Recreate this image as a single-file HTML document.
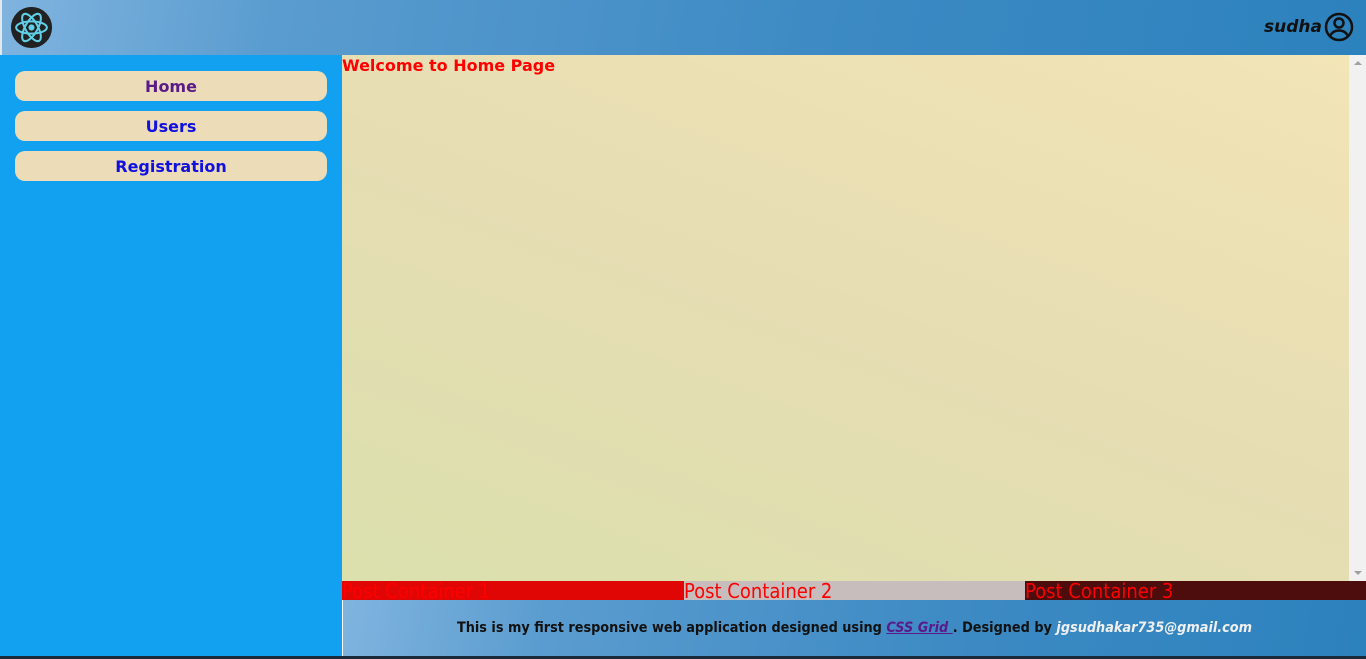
<!DOCTYPE html>
<html><head><style>
*{margin:0;padding:0;box-sizing:border-box}
body{width:1366px;height:659px;overflow:hidden;font-family:"DejaVu Sans","Liberation Sans",sans-serif;background:#fff;position:relative}
.hdr{position:absolute;left:0;top:0;width:1366px;height:55px;background:linear-gradient(100deg,#80b4df 0%,#5a9ccf 20%,#3d8ac4 60%,#2c82bd 100%);border-left:2px solid #e0e8f0}
.logo{position:absolute;left:9px;top:7px;width:41px;height:41px;border-radius:50%;background:#222}
.user{position:absolute;right:12px;top:12px;display:flex;align-items:center;font-style:italic;font-weight:bold;font-size:17px;color:#111}
.side{position:absolute;left:0;top:55px;width:342px;height:604px;background:#12a0f0}
.btn{position:absolute;left:15px;width:312px;height:30px;border-radius:10px;background:#ecdcb8;text-align:center;font-weight:bold;font-size:16px;line-height:31px;color:#1010e0}
.main{position:absolute;left:342px;top:55px;width:1007px;height:526px;background:linear-gradient(20deg,#dbe0ad 0%,#e6ddb3 50%,#f2e5b6 100%)}
.main h1{font-size:16px;color:#f00;font-weight:bold;line-height:21px}
.sb{position:absolute;left:1349px;top:55px;width:17px;height:526px;background:#f1f1f1}
.post{position:absolute;top:581px;height:19px;width:342px;color:#f00;font-size:20px;line-height:20px;font-family:"DejaVu Sans Condensed","DejaVu Sans",sans-serif;white-space:nowrap;overflow:hidden}
.ftr{position:absolute;left:342px;top:600px;width:1024px;height:56px;background:linear-gradient(100deg,#80b4df 0%,#5a9ccf 20%,#3d8ac4 60%,#2c82bd 100%);border-left:1px solid #fff;text-align:center;font-size:14.3px;font-weight:bold;line-height:56px;color:#111;font-family:"DejaVu Sans Condensed","DejaVu Sans",sans-serif}
.bot{position:absolute;left:0;top:656px;width:1366px;height:3px;background:#1a2a3a}
</style></head><body>
<div class="hdr">
<svg class="logo" viewBox="0 0 40 40"><circle cx="20" cy="20" r="20" fill="#222"/><g fill="none" stroke="#5fd0e8" stroke-width="2"><ellipse cx="20" cy="20" rx="15" ry="6"/><ellipse cx="20" cy="20" rx="15" ry="6" transform="rotate(60 20 20)"/><ellipse cx="20" cy="20" rx="15" ry="6" transform="rotate(-60 20 20)"/></g><circle cx="20" cy="20" r="3" fill="#5fd0e8"/></svg>
<div class="user">sudha<svg width="30" height="30" viewBox="0 0 30 30" style="margin-left:2px"><circle cx="15" cy="15" r="13" fill="none" stroke="#111" stroke-width="2.5"/><circle cx="15" cy="11" r="4.5" fill="none" stroke="#111" stroke-width="2.5"/><path d="M6 24c2-4 5-5.5 9-5.5s7 1.5 9 5.5" fill="none" stroke="#111" stroke-width="2.5"/></svg></div>
</div>
<div class="side">
<div class="btn" style="top:16px;color:#5a1a8a">Home</div>
<div class="btn" style="top:56px">Users</div>
<div class="btn" style="top:96px">Registration</div>
</div>
<div class="main"><h1>Welcome to Home Page</h1></div>
<div class="sb"><div style="position:absolute;left:5px;top:6px;border:4px solid transparent;border-bottom:4px solid #a0a0a0;border-top:0"></div><div style="position:absolute;left:5px;bottom:6px;border:4px solid transparent;border-top:4px solid #a0a0a0;border-bottom:0"></div></div>
<div class="post" style="left:342px;background:#e00606">Post Container 1</div>
<div class="post" style="left:684px;background:#c8bdbd">Post Container 2</div>
<div class="post" style="left:1025px;background:#4d0d0d">Post Container 3</div>
<div class="ftr">This is my first responsive web application designed using <a style="color:#5a1a8a;font-style:italic;text-decoration:underline">CSS Grid </a>. Designed by <i style="color:#f0f0f0">jgsudhakar735@gmail.com</i></div>
<div class="bot"></div>
</body></html>
